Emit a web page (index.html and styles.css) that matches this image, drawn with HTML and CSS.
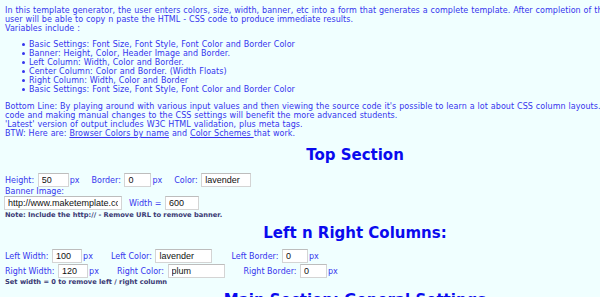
FILE: index.html
```html
<!DOCTYPE html>
<html lang="en">
  <head>
    <meta charset="UTF-8" />
    <title>Make Template - CSS Template Generator</title>
    <link rel="stylesheet" href="styles.css">
  </head>
  <body>
    <main class="page">
      <!-- Intro -->
      <p class="intro">
        In this template generator, the user enters colors, size, width, banner, etc into a form that generates a complete template. After completion of the form the<br>
        user will be able to copy n paste the HTML - CSS code to produce immediate results.<br>
        Variables include :
      </p>
      <ul class="vars">
        <li>Basic Settings: Font Size, Font Style, Font Color and Border Color</li>
        <li>Banner: Height, Color, Header Image and Border.</li>
        <li>Left Column: Width, Color and Border.</li>
        <li>Center Column: Color and Border. (Width Floats)</li>
        <li>Right Column: Width, Color and Border</li>
        <li>Basic Settings: Font Size, Font Style, Font Color and Border Color</li>
      </ul>
      <p class="intro">
        Bottom Line: By playing around with various input values and then viewing the source code it's possible to learn a lot about CSS column layouts. Experimenting with the<br>
        code and making manual changes to the CSS settings will benefit the more advanced students.<br>
        'Latest' version of output includes W3C HTML validation, plus meta tags.<br>
        BTW: Here are: <a href="#">Browser Colors by name</a> and <a href="#">Color Schemes </a>that work.
      </p>

      <!-- Top section -->
      <h2 class="top">Top Section</h2>
      <div class="row row-top">
        <label class="field">Height: <input class="w31" value="50"><span class="unit">px</span></label>
        <label class="field">Border: <input class="w27" value="0"><span class="unit">px</span></label>
        <label class="field">Color: <input class="w50" value="lavender"></label>
      </div>
      <div class="caption">Banner Image:</div>
      <div class="row row-banner">
        <input class="w117" value="http://www.maketemplate.com/images/banner.jpg">
        <label class="field">Width = <input class="w34" value="600"></label>
      </div>
      <p class="note">Note: Include the http:// - Remove URL to remove banner.</p>

      <!-- Left and right columns -->
      <h2 class="cols">Left n Right Columns:</h2>
      <div class="row row-cols">
        <label class="field">Left Width: <input class="w30" value="100"><span class="unit">px</span></label>
        <label class="field">Left Color: <input class="w57" value="lavender"></label>
        <label class="field">Left Border: <input class="w26" value="0"><span class="unit">px</span></label>
      </div>
      <div class="row row-cols">
        <label class="field">Right Width: <input class="w30" value="120"><span class="unit">px</span></label>
        <label class="field">Right Color: <input class="w57" value="plum"></label>
        <label class="field">Right Border: <input class="w27" value="0"><span class="unit">px</span></label>
      </div>
      <p class="note note-cols">Set width = 0 to remove left / right column</p>

      <!-- Main section -->
      <h2 class="main">Main Section: General Settings</h2>
    </main>
  </body>
</html>
```

FILE: styles.css
```css
html,
body {
  margin: 0;
  overflow: hidden;
  background-color: #f0ffff;
}

.page {
  width: 700px;
  padding: 6px 0 0 5px;
  font-family: "DejaVu Sans", Verdana, sans-serif;
  font-size: 8px;
  line-height: 9px;
  color: #3535ee;
}

/* Intro text */
.intro,
.vars {
  letter-spacing: 0.05px;
  word-spacing: 0.3px;
}

.intro {
  margin: 0;
  white-space: nowrap;
}

.intro a {
  color: #3535ee;
}

.vars {
  margin: 7px 0 8px;
  padding-left: 24px;
  list-style: none;
}

.vars li::before {
  content: "";
  display: inline-block;
  width: 3px;
  height: 3px;
  margin: 0 4px 1px -7px;
  border-radius: 50%;
  background-color: #3535ee;
  vertical-align: middle;
}

/* Headings */
h2 {
  font-size: 15px;
  line-height: 18px;
  text-align: center;
  color: #0a0aee;
}

h2.top {
  margin: 8px 0 9px;
}

h2.cols {
  margin: 5px 0 7px;
}

h2.main {
  margin: 5px 0 0;
}

/* Form rows */
.row {
  display: flex;
  align-items: center;
  height: 14px;
}

.field {
  display: inline-flex;
  align-items: center;
  white-space: pre;
}

.row-top .field {
  margin-right: 12px;
}

.row-cols .field {
  margin-right: 18px;
}

.row-cols + .row-cols {
  margin-top: 1px;
}

.row-banner {
  margin-left: -2px;
}

.row-banner input.w117 {
  margin-right: 7px;
}

.caption {
  height: 9px;
}

input {
  box-sizing: border-box;
  height: 14px;
  margin: 0 1px;
  padding: 0 3px;
  border: 1px solid #d4d4d4;
  border-top-color: #bdbdbd;
  background: #fff;
  font-family: "Liberation Sans", Arial, sans-serif;
  font-size: 9px;
  color: #111;
}

.w26 { width: 26px; }
.w27 { width: 27px; }
.w30 { width: 30px; }
.w31 { width: 31px; }
.w34 { width: 34px; }
.w50 { width: 50px; }
.w57 { width: 57px; }
.w117 { width: 118px; }

.note {
  margin: 1px 0 0;
  font-size: 6.7px;
  line-height: 8px;
  font-weight: bold;
  color: #3a3a74;
}

.note-cols {
  margin-top: 0;
}
```
